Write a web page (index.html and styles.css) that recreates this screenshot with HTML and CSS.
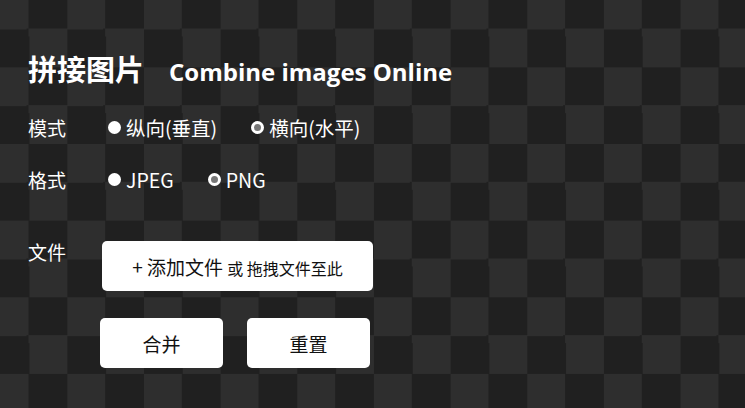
FILE: index.html
```html
<!DOCTYPE html>
<html lang="zh">
<head>
<meta charset="utf-8">
<title>拼接图片</title>
<link rel="stylesheet" href="styles.css">
</head>
<body>
<div class="page">
  <h1 class="title"><span class="title-cn">拼接图片</span><span class="title-en">Combine images Online</span></h1>
  <div class="row row-opt">
    <div class="label">模式</div>
    <div class="opts">
      <label class="opt"><span class="radio"></span>纵向(垂直)</label>
      <label class="opt"><span class="radio ring"></span>横向(水平)</label>
    </div>
  </div>
  <div class="row row-opt">
    <div class="label">格式</div>
    <div class="opts">
      <label class="opt"><span class="radio"></span>JPEG</label>
      <label class="opt"><span class="radio ring"></span>PNG</label>
    </div>
  </div>
  <div class="row row-file">
    <div class="label">文件</div>
    <button class="btn file-btn">+ 添加文件 <small>或 拖拽文件至此</small></button>
  </div>
  <div class="actions">
    <button class="btn act">合并</button>
    <button class="btn act">重置</button>
  </div>
</div>
</body>
</html>
```

FILE: styles.css
```css
html {
  background-color: #202020;
  background-image: conic-gradient(#202020 25%, #2e2e2e 0 50%, #202020 0 75%, #2e2e2e 0);
  background-size: 76.67px 76.67px;
  background-position: -9.33px -9.33px;
  min-height: 100%;
}
body {
  margin: 0;
  font-family: "Open Sans", "Noto Sans CJK SC", sans-serif;
  color: #fff;
}
.page {
  padding: 42px 0 0 28px;
}
.title {
  margin: 0;
  display: flex;
  align-items: baseline;
  gap: 25px;
  height: 59px;
  font-weight: 700;
  line-height: 52px;
}
.title-cn {
  font-family: "Noto Sans CJK SC", sans-serif;
  font-size: 29px;
}
.title-en {
  font-size: 24px;
}
.row {
  display: flex;
}
.label {
  width: 74px;
  font-family: "Noto Sans CJK SC", sans-serif;
  font-size: 19px;
}
.row-opt {
  height: 52px;
  align-items: center;
}
.opts {
  display: flex;
  gap: 34px;
  padding-left: 6px;
}
.opt {
  display: flex;
  align-items: center;
  gap: 5px;
  font-size: 19.5px;
  font-family: "Noto Sans CJK SC", sans-serif;
}
.radio {
  width: 13px;
  height: 13px;
  border-radius: 50%;
  background: #fff;
  box-sizing: border-box;
}
.radio.ring {
  background: #777;
  border: 3px solid #fff;
}
.row-file {
  margin-top: 36px;
  align-items: flex-start;
}
.row-file .label {
  margin-top: -3px;
}
.btn {
  background: #fff;
  border: none;
  border-radius: 5px;
  color: #111;
  font-family: "Noto Sans CJK SC", sans-serif;
  font-size: 19px;
  padding: 0;
}
.file-btn {
  width: 271px;
  height: 50px;
}
.file-btn small {
  font-size: 16px;
}
.actions {
  display: flex;
  gap: 24px;
  margin-top: 27px;
  padding-left: 72px;
}
.act {
  width: 123px;
  height: 50px;
}
```
